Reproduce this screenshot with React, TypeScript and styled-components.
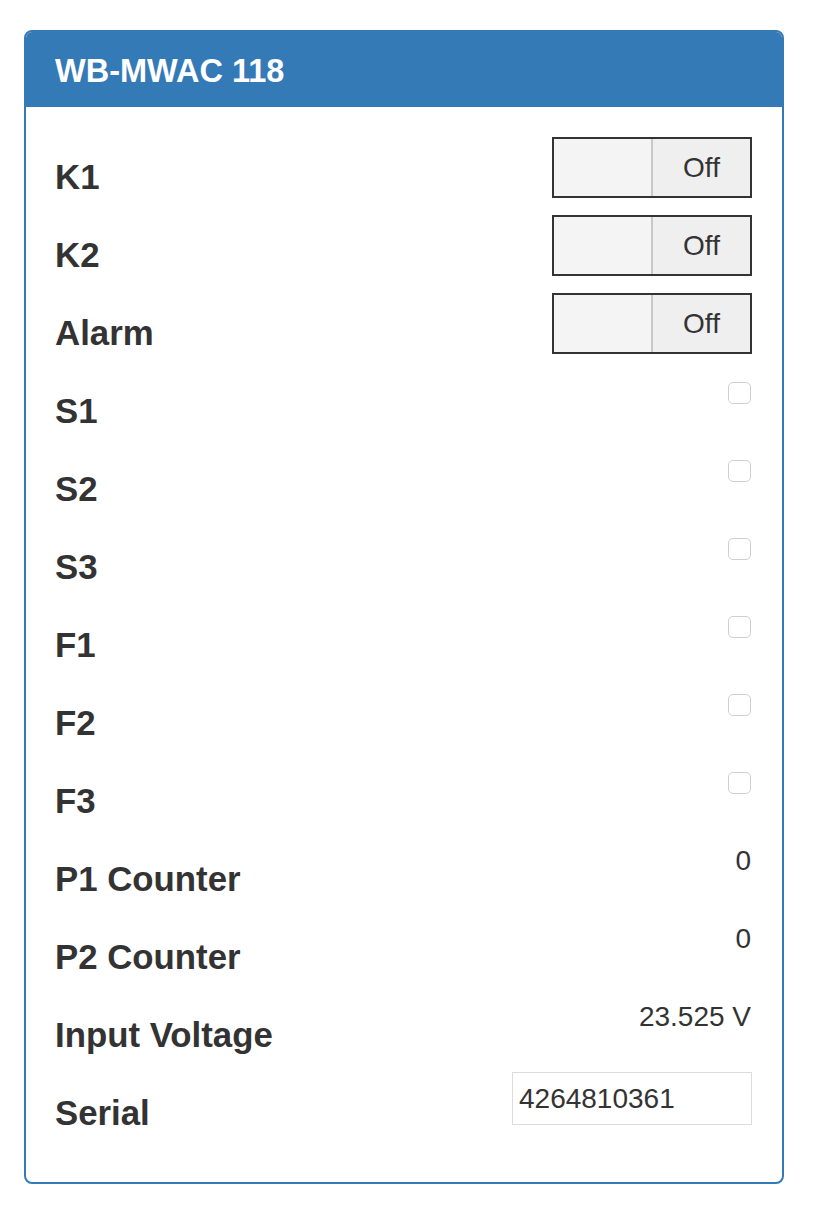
import React from "react";
import styled, { createGlobalStyle } from "styled-components";

const Global = createGlobalStyle`
  html, body { margin: 0; padding: 0; background: #fff; }
  body { font-family: "Liberation Sans", Arial, sans-serif; color: #333; }
`;

const Page = styled.div`
  padding: 30px 30px 30px 24px;
`;

const Panel = styled.section`
  width: 756px;
  border: 2px solid #337ab7;
  border-radius: 8px;
  overflow: hidden;
  background: #fff;
`;

const Header = styled.header`
  background: #337ab7;
  height: 75px;
  box-sizing: border-box;
  display: flex;
  align-items: center;
  padding: 3px 29px 0;
  color: #fff;
  font-size: 32.5px;
  font-weight: 700;
  line-height: 1;
`;

const Body = styled.div`
  padding: 30px 30px 31px 29px;
`;

const Row = styled.div`
  display: flex;
  justify-content: space-between;
  align-items: flex-start;
  height: 78px;
`;

const Label = styled.div`
  font-size: 34.8px;
  font-weight: 700;
  line-height: 40px;
  margin-top: 20px;
  color: #333;
`;

const Toggle = styled.div`
  display: flex;
  width: 200px;
  height: 61px;
  box-sizing: border-box;
  border: 2px solid #333;
`;

const ToggleKnob = styled.div`
  flex: 0 0 97px;
  background: #f4f4f4;
  border-right: 2px solid #c8c8c8;
`;

const ToggleText = styled.div`
  flex: 1;
  background: #efefef;
  display: flex;
  align-items: center;
  justify-content: center;
  font-size: 28px;
  color: #333;
`;

const Check = styled.div`
  width: 23px;
  height: 22px;
  box-sizing: border-box;
  border: 1px solid #cfcfcf;
  border-radius: 5px;
  background: #fff;
  margin-top: 11px;
  margin-right: 1px;
`;

const Value = styled.div`
  font-size: 28px;
  line-height: 40px;
  margin-top: 2px;
  margin-right: 1px;
  color: #333;
`;

const Input = styled.div`
  width: 240px;
  height: 53px;
  box-sizing: border-box;
  border: 1px solid #dcdcdc;
  margin-top: -1px;
  padding: 0 6px;
  display: flex;
  align-items: center;
  font-size: 28px;
  color: #333;
`;

type Item =
  | { label: string; kind: "toggle" }
  | { label: string; kind: "check" }
  | { label: string; kind: "value"; value: string }
  | { label: string; kind: "input"; value: string };

const items: Item[] = [
  { label: "K1", kind: "toggle" },
  { label: "K2", kind: "toggle" },
  { label: "Alarm", kind: "toggle" },
  { label: "S1", kind: "check" },
  { label: "S2", kind: "check" },
  { label: "S3", kind: "check" },
  { label: "F1", kind: "check" },
  { label: "F2", kind: "check" },
  { label: "F3", kind: "check" },
  { label: "P1 Counter", kind: "value", value: "0" },
  { label: "P2 Counter", kind: "value", value: "0" },
  { label: "Input Voltage", kind: "value", value: "23.525 V" },
  { label: "Serial", kind: "input", value: "4264810361" },
];

function Control({ item }: { item: Item }) {
  switch (item.kind) {
    case "toggle":
      return (
        <Toggle>
          <ToggleKnob />
          <ToggleText>Off</ToggleText>
        </Toggle>
      );
    case "check":
      return <Check />;
    case "value":
      return <Value>{item.value}</Value>;
    case "input":
      return <Input>{item.value}</Input>;
  }
}

export default function App() {
  return (
    <>
      <Global />
      <Page>
        <Panel>
          <Header>WB-MWAC 118</Header>
          <Body>
            {items.map((it) => (
              <Row key={it.label}>
                <Label>{it.label}</Label>
                <Control item={it} />
              </Row>
            ))}
          </Body>
        </Panel>
      </Page>
    </>
  );
}
